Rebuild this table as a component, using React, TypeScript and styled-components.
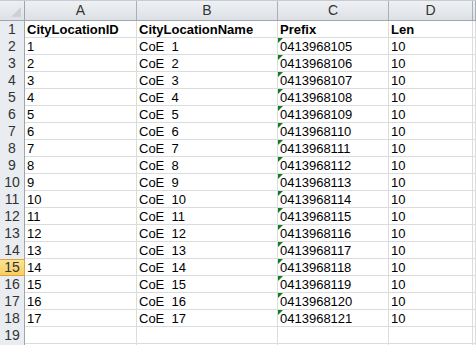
import React from 'react';
import styled, { createGlobalStyle } from 'styled-components';

const GlobalStyle = createGlobalStyle`
  html, body {
    margin: 0;
    padding: 0;
    background: #ffffff;
    overflow: hidden;
  }
  body {
    font-family: "Liberation Sans", Arial, sans-serif;
  }
`;

const COLS = '25px 112px 141px 111px 84px 1fr';

const Sheet = styled.div`
  width: 476px;
  height: 345px;
  overflow: hidden;
  border-top: 1px solid #c8ccd2;
  box-sizing: border-box;
`;

const HeaderRow = styled.div`
  display: grid;
  grid-template-columns: ${COLS};
  height: 19px;
  border-bottom: 1px solid #9fa5ad;
  background: linear-gradient(#eef0f3, #dde1e6);
`;

const Corner = styled.div`
  position: relative;
  border-right: 1px solid #9fa5ad;
  &::after {
    content: '';
    position: absolute;
    right: 3px;
    bottom: 3px;
    border-style: solid;
    border-width: 0 0 10px 10px;
    border-color: transparent transparent #cdd1d6 transparent;
  }
`;

const ColHead = styled.div`
  border-right: 1px solid #a9b0b8;
  font-size: 14px;
  color: #333;
  text-align: center;
  line-height: 19px;
`;

const Row = styled.div`
  display: grid;
  grid-template-columns: ${COLS};
  height: 16px;
  border-bottom: 1px solid #dadcdd;
`;

const RowHead = styled.div<{ $active?: boolean }>`
  border-right: 1px solid ${p => (p.$active ? '#e4a23a' : '#9fa5ad')};
  background: ${p => (p.$active ? 'linear-gradient(#fbe49a, #f6cd5c)' : '#e9ecf0')};
  ${p => (p.$active ? 'box-shadow: inset 0 -1px 0 #e4a23a, inset 0 1px 0 #e4a23a;' : '')}
  margin-bottom: -1px;
  border-bottom: 1px solid ${p => (p.$active ? '#e4a23a' : '#c5cad0')};
  font-size: 14px;
  color: #333;
  text-align: center;
  line-height: 17px;
`;

const Cell = styled.div<{ $bold?: boolean; $flag?: boolean }>`
  position: relative;
  border-right: 1px solid #dadcdd;
  padding-left: 2px;
  font-size: 13px;
  font-weight: ${p => (p.$bold ? 700 : 400)};
  color: #000;
  line-height: 17px;
  white-space: pre;
  overflow: hidden;
  &::before {
    content: '';
    display: ${p => (p.$flag ? 'block' : 'none')};
    position: absolute;
    left: 0;
    top: 0;
    border-style: solid;
    border-width: 5px 5px 0 0;
    border-color: #117a22 transparent transparent transparent;
  }
`;

const rows = Array.from({ length: 17 }, (_, i) => ({
  id: String(i + 1),
  name: `CoE  ${i + 1}`,
  prefix: String(413968105 + i).padStart(10, '0'),
  len: '10',
}));

const App: React.FC = () => {
  return (
    <>
      <GlobalStyle />
      <Sheet>
        <HeaderRow>
          <Corner />
          <ColHead>A</ColHead>
          <ColHead>B</ColHead>
          <ColHead>C</ColHead>
          <ColHead>D</ColHead>
          <ColHead />
        </HeaderRow>
        <Row>
          <RowHead>1</RowHead>
          <Cell $bold>CityLocationID</Cell>
          <Cell $bold>CityLocationName</Cell>
          <Cell $bold>Prefix</Cell>
          <Cell $bold>Len</Cell>
          <Cell />
        </Row>
        {rows.map((r, i) => (
          <Row key={r.id}>
            <RowHead $active={i + 2 === 15}>{i + 2}</RowHead>
            <Cell>{r.id}</Cell>
            <Cell>{r.name}</Cell>
            <Cell $flag>{r.prefix}</Cell>
            <Cell>{r.len}</Cell>
            <Cell />
          </Row>
        ))}
        <Row>
          <RowHead>19</RowHead>
          <Cell />
          <Cell />
          <Cell />
          <Cell />
          <Cell />
        </Row>
        <Row>
          <RowHead />
          <Cell />
          <Cell />
          <Cell />
          <Cell />
          <Cell />
        </Row>
      </Sheet>
    </>
  );
};

export default App;
